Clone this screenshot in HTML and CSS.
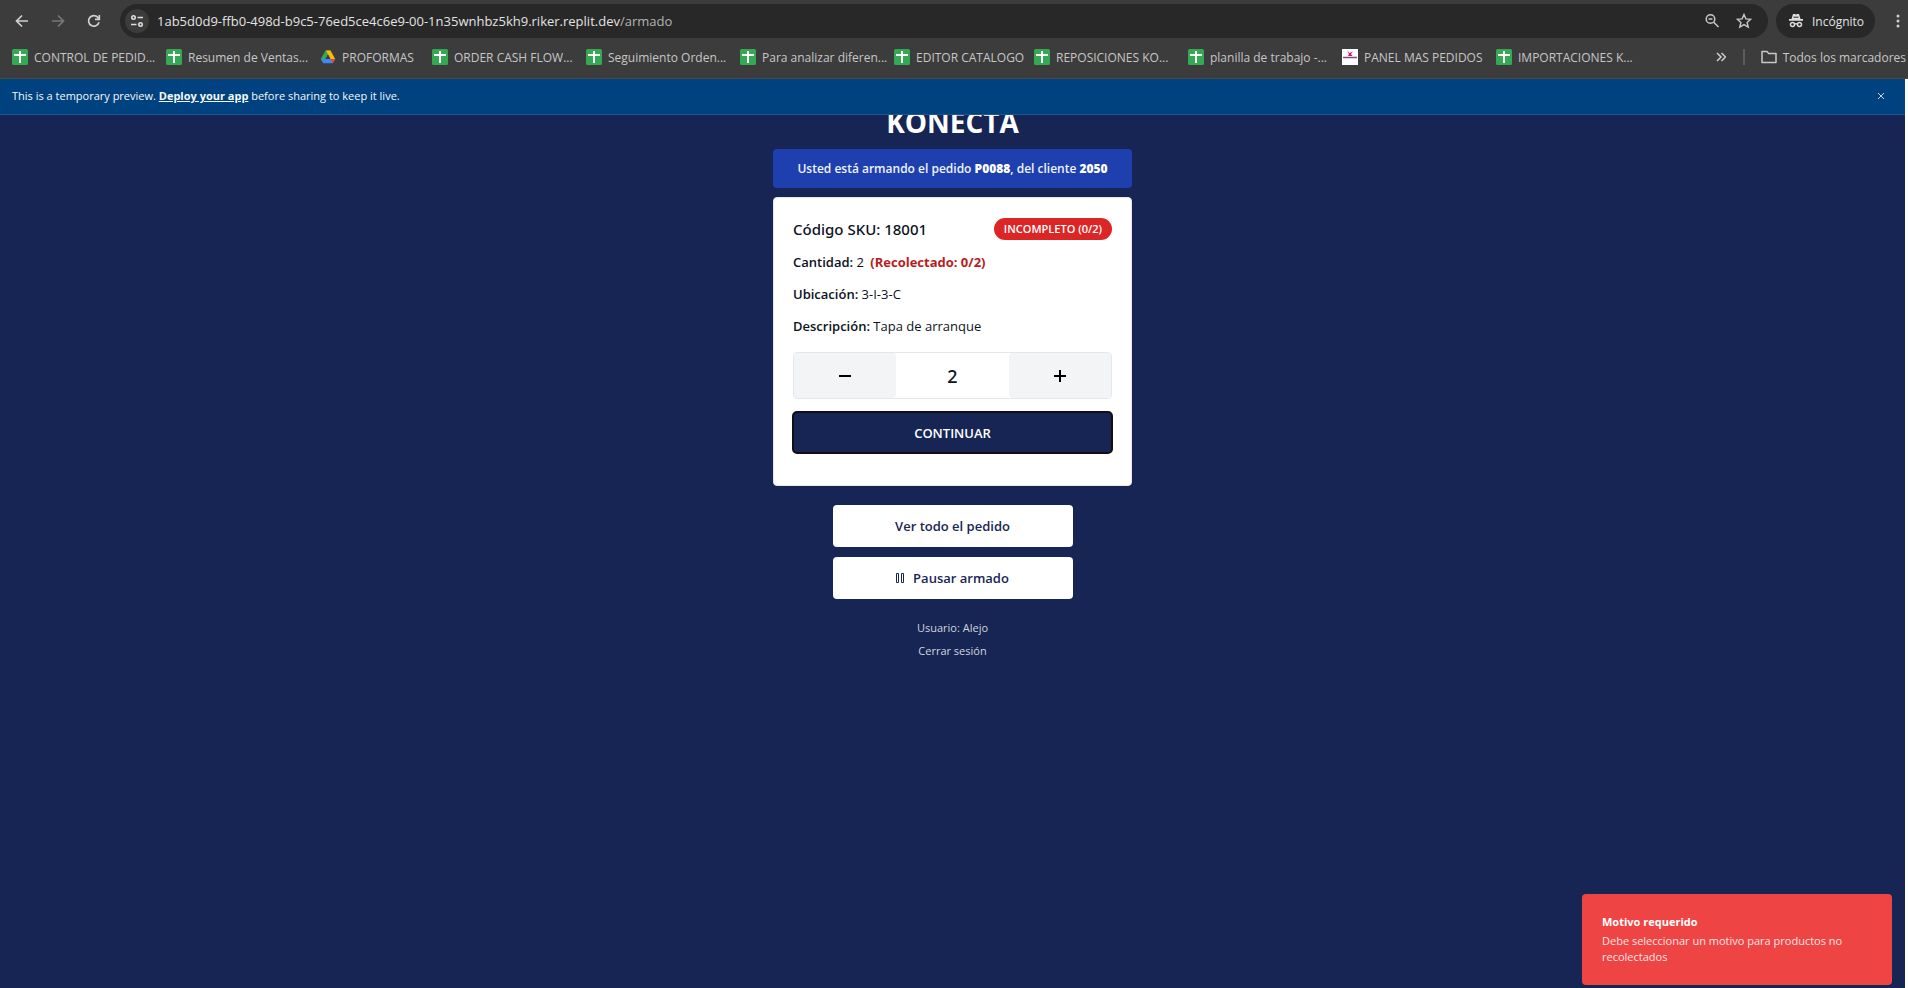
FILE: index.html
```html
<!DOCTYPE html>
<html lang="es">
<head>
<meta charset="utf-8">
<title>Konecta - Armado</title>
<link rel="stylesheet" href="styles.css">
</head>
<body>
<svg class="defs" width="0" height="0" aria-hidden="true">
  <symbol id="sheet" viewBox="0 0 16 16"><rect width="16" height="16" rx="1.5" fill="#34a853"/><path d="M2 5h12v2H9v7H7V7H2zM7 2h2v4H7z" fill="#fff"/></symbol>
</svg>
<header class="browser">
  <div class="toolbar">
    <button class="nav" aria-label="Atrás"><svg width="16" height="16" viewBox="0 0 16 16"><path d="M14 8H3M8 2.5 2.5 8 8 13.5" fill="none" stroke="#d0d0d0" stroke-width="1.7"/></svg></button>
    <button class="nav" aria-label="Adelante"><svg width="16" height="16" viewBox="0 0 16 16"><path d="M2 8h11M8 2.5 13.5 8 8 13.5" fill="none" stroke="#777" stroke-width="1.7"/></svg></button>
    <button class="nav" aria-label="Recargar"><svg width="16" height="16" viewBox="0 0 16 16"><path d="M13 9.3A5.3 5.3 0 1 1 12.2 4.8L13.2 6M13.3 2v4.3H9" fill="none" stroke="#d0d0d0" stroke-width="1.7"/></svg></button>
    <div class="omnibox">
      <button class="site" aria-label="Información del sitio"><svg width="14" height="14" viewBox="0 0 14 14" fill="none" stroke="#dedede" stroke-width="1.6"><circle cx="3.5" cy="3.5" r="1.7"/><path d="M7.5 3.5H13M1 10.5h5.5"/><circle cx="10.5" cy="10.5" r="1.7"/></svg></button>
      <span class="url">1ab5d0d9-ffb0-498d-b9c5-76ed5ce4c6e9-00-1n35wnhbz5kh9.riker.replit.dev<span class="path">/armado</span></span>
      <button class="tool" aria-label="Zoom"><svg width="16" height="16" viewBox="0 0 16 16" fill="none" stroke="#c8c8c8" stroke-width="1.5"><circle cx="6.5" cy="6" r="4.3"/><path d="m9.7 9.3 4.8 4.7M4.500 6h4"/></svg></button>
      <button class="tool" aria-label="Favorito"><svg width="16" height="16" viewBox="0 0 16 16"><path d="m8 1.500 1.900 4.400 4.800.4-3.600 3.100 1.100 4.700L8 11.600l-4.200 2.500 1.100-4.700L1.300 6.300l4.800-.4z" fill="none" stroke="#c8c8c8" stroke-width="1.4"/></svg></button>
    </div>
    <div class="incognito"><svg width="16" height="16" viewBox="0 0 16 16"><path d="M3.500 6 5 1h1.700L8 1.500 9.300 1H11l1.500 5H15v1.700H1V6z" fill="#e0e0e0"/><path d="M5.500 4.200h5" stroke="#282828"/><g fill="none" stroke="#e0e0e0" stroke-width="1.400"><circle cx="4.500" cy="11.500" r="2"/><circle cx="11.500" cy="11.500" r="2"/><path d="M6.500 11.200q1.500-.8 3 0"/></g></svg>Incógnito</div>
    <button class="more" aria-label="Menú"><svg width="4" height="16" viewBox="0 0 4 16" fill="#d0d0d0"><circle cx="2" cy="3" r="1.500"/><circle cx="2" cy="8" r="1.500"/><circle cx="2" cy="13" r="1.500"/></svg></button>
  </div>
  <nav class="bookmarks">
    <a class="wide" href="#"><svg width="16" height="16"><use href="#sheet"/></svg>CONTROL DE PEDID...</a>
    <a class="wide" href="#"><svg width="16" height="16"><use href="#sheet"/></svg>Resumen de Ventas...</a>
    <a class="mini" href="#"><svg width="16" height="16" viewBox="0 0 16 16"><path d="M5.500 1.500h5L8 6 4 13.500.800 10z" fill="#34a853"/><path d="M6 1.500h4.500L15.200 10h-5z" fill="#fbbc04"/><path d="M.8 10h14.400l-2.400 4.300H3.200z" fill="#4285f4"/><path d="M10.500 10h4.700l-2.400 4.300z" fill="#ea4335"/><path d="M8 5.500 10.600 10H5.400z" fill="#3c3c3c"/></svg>PROFORMAS</a>
    <a class="wide" href="#"><svg width="16" height="16"><use href="#sheet"/></svg>ORDER CASH FLOW...</a>
    <a class="wide" href="#"><svg width="16" height="16"><use href="#sheet"/></svg>Seguimiento Orden...</a>
    <a class="wide" href="#"><svg width="16" height="16"><use href="#sheet"/></svg>Para analizar diferen...</a>
    <a class="mid" href="#"><svg width="16" height="16"><use href="#sheet"/></svg>EDITOR CATALOGO</a>
    <a class="wide" href="#"><svg width="16" height="16"><use href="#sheet"/></svg>REPOSICIONES KO...</a>
    <a class="wide" href="#"><svg width="16" height="16"><use href="#sheet"/></svg>planilla de trabajo -...</a>
    <a class="wide" href="#"><svg width="16" height="16" viewBox="0 0 16 16"><path fill="#fff" d="M0 0h16v16H0z"/><path d="m5 1 2.500 3L11 2.500 9 5l1.500 2H6l1-2z" fill="#c2187e"/><path d="M1 8.500h14" stroke="#86496f" stroke-width="1.500"/></svg>PANEL MAS PEDIDOS</a>
    <a class="wide" href="#"><svg width="16" height="16"><use href="#sheet"/></svg>IMPORTACIONES K...</a>
    <div class="overflow">
      <button class="chev" aria-label="Más marcadores"><svg width="10" height="10" viewBox="0 0 10 10"><path d="m1 1 4 4-4 4m4.500-8 4 4-4 4" fill="none" stroke="#d0d0d0" stroke-width="1.5"/></svg></button>
      <a class="all" href="#"><svg width="16" height="16" viewBox="0 0 16 16"><path d="M1 2.500h5l1.700 2H15v9H1z" fill="none" stroke="#c8c8c8" stroke-width="1.500" stroke-linejoin="round"/></svg>Todos los marcadores</a>
    </div>
  </nav>
</header>
<div class="page">
  <div class="banner">
    <p>This is a temporary preview. <a href="#">Deploy your app</a> before sharing to keep it live.</p>
    <button aria-label="Cerrar"><svg width="8" height="8" viewBox="0 0 8 8"><path d="m1 1 6 6M7 1 1 7" stroke="#c9d8e8"/></svg></button>
  </div>
  <main class="content">
    <h1>KONECTA</h1>
    <div class="order">Usted está armando el pedido <b>P0088</b>, del cliente <b>2050</b></div>
    <section class="card">
      <div class="head"><h2>Código SKU: 18001</h2><span class="badge">INCOMPLETO (0/2)</span></div>
      <p><b>Cantidad:</b> 2 <strong>(Recolectado: 0/2)</strong></p>
      <p><b>Ubicación:</b> 3-I-3-C</p>
      <p><b>Descripción:</b> Tapa de arranque</p>
      <div class="stepper">
        <button aria-label="Restar"><svg width="12" height="12" viewBox="0 0 12 12"><path d="M0 6h12" stroke="#000" stroke-width="2"/></svg></button>
        <output>2</output>
        <button aria-label="Sumar"><svg width="12" height="12" viewBox="0 0 12 12"><path d="M0 6h12M6 0v12" stroke="#000" stroke-width="2"/></svg></button>
      </div>
      <button class="continue">CONTINUAR</button>
    </section>
    <div class="actions">
      <button>Ver todo el pedido</button>
      <button><svg width="8" height="10" viewBox="0 0 8 10"><path d="M.5.500h2v9h-2zM5.500.500h2v9h-2z" fill="none" stroke="#172554"/></svg>Pausar armado</button>
    </div>
    <div class="user"><span>Usuario: Alejo</span><button>Cerrar sesión</button></div>
  </main>
  <div class="toast" role="alert"><b>Motivo requerido</b><span>Debe seleccionar un motivo para productos no recolectados</span></div>
</div>
</body>
</html>
```
FILE: styles.css
```css
* { box-sizing: border-box; }
body {
  margin: 0;
  height: 100vh;
  display: flex;
  flex-direction: column;
  overflow: hidden;
  background: #fff;
  font-family: "Open Sans", "Noto Sans", sans-serif;
  font-size: 13px;
}
button { border: 0; padding: 0; background: none; font: inherit; color: inherit; }
a { color: inherit; text-decoration: none; }
p, h1, h2 { margin: 0; }
svg { display: block; flex: none; }
.defs { position: absolute; }
.browser { background: #3c3c3c; color: #c7c7c7; border-bottom: 1px solid #4a4a4a; }
.toolbar { display: flex; align-items: center; height: 38px; padding: 4px 0 0 4px; }
.nav { width: 36px; height: 34px; display: grid; place-items: center; flex: none; }
.tool { width: 32px; height: 34px; display: grid; place-items: center; flex: none; }
.omnibox {
  flex: 1;
  display: flex;
  align-items: center;
  height: 34px;
  margin-left: 8px;
  padding: 0 8px 0 5px;
  border-radius: 17px;
  background: #282828;
}
.site { width: 24px; height: 24px; border-radius: 50%; background: #3c3c3c; display: grid; place-items: center; }
.url { flex: 1; margin-left: 8px; color: #e3e3e3; white-space: nowrap; }
.path { color: #b4b4b4; }
.incognito {
  display: flex;
  flex: none;
  align-items: center;
  gap: 8px;
  width: 99px;
  height: 34px;
  margin-left: 8px;
  padding-left: 12px;
  border-radius: 17px;
  background: #282828;
  color: #e3e3e3;
  font-size: 12px;
}
.more { width: 21px; height: 34px; display: grid; place-items: center; flex: none; margin-left: 12px; }
.bookmarks {
  display: flex;
  align-items: center;
  height: 40px;
  padding: 0 2px 2px 12px;
  font-size: 12px;
  white-space: nowrap;
}
.bookmarks a { display: flex; align-items: center; gap: 6px; }
.bookmarks .wide { width: 154px; }
.bookmarks .mini { width: 112px; }
.bookmarks .mid { width: 140px; }
.overflow { display: flex; align-items: center; margin-left: auto; }
.chev { padding-right: 17px; margin-right: 16px; border-right: 2px solid #5c5c5c; height: 16px; }
.page {
  position: relative;
  flex: 1;
  margin-right: 3px;
  background: #172554;
  min-height: 0;
}
.banner {
  position: relative;
  z-index: 1;
  display: flex;
  align-items: center;
  justify-content: space-between;
  height: 36px;
  padding: 0 20px 2px 12px;
  background: #00427f;
  border-bottom: 1px solid #1f568f;
  color: #f5f9fc;
  font-size: 11px;
  font-weight: 500;
}
.banner a { font-weight: 700; text-decoration: underline; }
.content { display: flex; flex-direction: column; align-items: center; width: 359px; margin: 0 auto; }
h1 { margin-top: -11px; color: #fff; font-size: 28px; line-height: 36px; font-weight: 700; }
.order {
  width: 100%;
  margin-top: 9px;
  padding: 10px;
  border-radius: 4px;
  background: #1e40af;
  color: #f0f4ff;
  text-align: center;
  font-weight: 600;
  font-size: 12px;
  line-height: 19px;
  white-space: nowrap;
}
.order b { color: #fff; }
.card {
  width: 100%;
  margin-top: 9px;
  padding: 20px 19px;
  border: 1px solid #e5e7eb;
  border-radius: 4px;
  background: #fff;
  color: #0c1222;
}
.head { display: flex; align-items: center; justify-content: space-between; height: 22px; margin-bottom: 6px; }
h2 { font-family: "Noto Sans", sans-serif; font-size: 15px; font-weight: 500; }
.badge {
  padding: 0 10px;
  border-radius: 11px;
  background: #dc2626;
  color: #fff;
  font-size: 11px;
  line-height: 22px;
  font-weight: 600;
}
.card p { line-height: 32px; }
.card b { font-weight: 600; }
.card strong { margin-left: 3px; color: #b91c1c; }
.stepper { display: flex; margin-top: 10px; height: 47px; border: 1px solid #e5e7eb; border-radius: 4px; }
.stepper button { width: 102px; border-radius: 4px; background: #f3f4f6; display: grid; place-items: center; }
.stepper output { flex: 1; text-align: center; font-family: "Noto Sans", sans-serif; font-size: 18px; line-height: 47px; font-weight: 500; }
.continue {
  display: block;
  width: 100%;
  height: 41px;
  margin: 13px 0 12px;
  border-radius: 4px;
  background: #172554;
  outline: 2px solid #101010;
  outline-offset: -1px;
  color: #fff;
  font-weight: 600;
}
.actions { display: flex; flex-direction: column; gap: 10px; width: 240px; margin-top: 19px; }
.actions button {
  display: flex;
  align-items: center;
  justify-content: center;
  gap: 9px;
  height: 42px;
  border-radius: 4px;
  background: #fff;
  color: #172554;
  font-weight: 600;
}
.user {
  display: flex;
  flex-direction: column;
  align-items: center;
  margin-top: 17px;
  color: #d1d5db;
  font-size: 11px;
  line-height: 23px;
}
.toast {
  position: absolute;
  right: 13px;
  bottom: 3px;
  display: flex;
  flex-direction: column;
  gap: 3px;
  width: 310px;
  padding: 20px 40px 20px 20px;
  border-radius: 4px;
  background: #ef4444;
  color: #fbe5e5;
  font-size: 11px;
  line-height: 16px;
}
.toast b { color: #fff; }
```
